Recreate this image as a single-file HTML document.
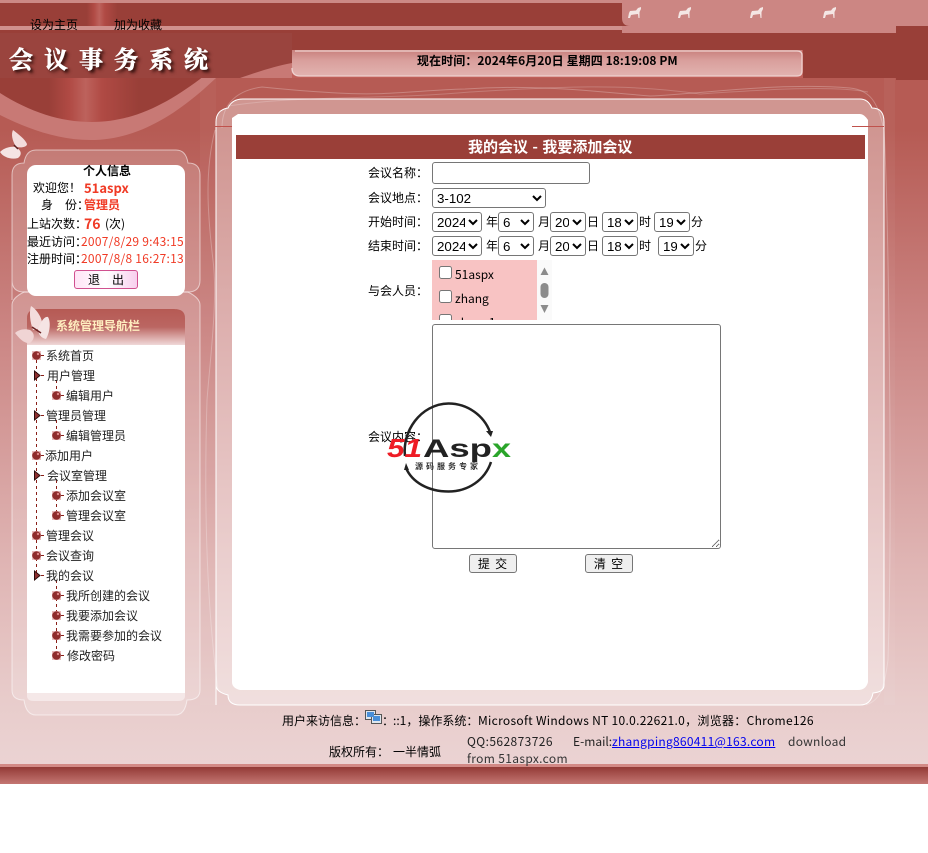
<!DOCTYPE html>
<html lang="zh"><head><meta charset="utf-8"><title>会议事务系统</title>
<style>
html,body{margin:0;padding:0;background:#fff;}
body{width:928px;height:853px;overflow:hidden;position:relative;font:12px/14px "WenQuanYi Zen Hei","Noto Sans CJK SC",sans-serif;color:#000;}
.a{position:absolute;}
.t{position:absolute;white-space:nowrap;line-height:14px;}
.r{color:#f03a25;}
.b{font-weight:bold;}
select{position:absolute;font:13.33px "Liberation Sans",sans-serif;height:20px;padding:0;box-sizing:border-box;background:#fff;border:1px solid #767676;border-radius:3px;}
input[type=checkbox]{position:absolute;margin:0;width:13px;height:13px;}
button{position:absolute;font:12px "WenQuanYi Zen Hei",sans-serif;padding:0;letter-spacing:1px;}
.n{color:#222;}
</style></head><body>
<div class="a" style="left:0;top:0;width:928px;height:784px;background:linear-gradient(#b65b54 0,#b65b54 130px,#cb8583 330px,#dfb4b3 560px,#e8cccb 700px,#ebd3d3 764px);"></div>
<svg class="a" style="left:0;top:0" width="928" height="784" viewBox="0 0 928 784">
<defs>
<linearGradient id="sheen" x1="0" x2="1" y1="0" y2="0"><stop offset="0" stop-color="#993f38"/><stop offset=".24" stop-color="#993f38"/><stop offset=".34" stop-color="#b04a44"/><stop offset=".42" stop-color="#bd625c"/><stop offset=".5" stop-color="#b04a44"/><stop offset=".68" stop-color="#993f38"/><stop offset="1" stop-color="#993f38"/></linearGradient>
<linearGradient id="bar" x1="0" x2="0" y1="0" y2="1"><stop offset="0" stop-color="#c8807c"/><stop offset=".4" stop-color="#d99f9c"/><stop offset="1" stop-color="#e2b3b0"/></linearGradient>
<linearGradient id="foot" x1="0" x2="0" y1="0" y2="1"><stop offset="0" stop-color="#933a36"/><stop offset="1" stop-color="#c47672"/></linearGradient>
<linearGradient id="head" x1="0" x2="0" y1="0" y2="1"><stop offset="0" stop-color="#b65a54"/><stop offset=".5" stop-color="#bb6662"/><stop offset="1" stop-color="#f0d8d8"/></linearGradient>
</defs>
<!-- band under swoosh -->
<path d="M0 70 L0 115 C30 130 60 140 90 140 C140 140 180 112 216 78 L240 70 Z" fill="#c87975"/>
<!-- dark swoosh -->
<path d="M0 70 L0 93 C30 112 60 122 92 122 C135 122 170 102 204 76 L204 70 Z" fill="url(#sheen)"/>
<!-- top bands -->
<rect x="0" y="0" width="928" height="3" fill="#cc8985"/>
<rect x="0" y="3" width="928" height="23" fill="#993f38"/>
<rect x="0" y="26" width="928" height="4" fill="#d0918d"/>
<rect x="0" y="30" width="928" height="48" fill="#993f38"/>
<rect x="70" y="3" width="70" height="23" fill="url(#sheen)"/>
<rect x="0" y="33" width="292" height="45" fill="#9a443e"/>
<path d="M240 78C260 71 276 66 292 63V78Z" fill="#c87975"/>
<path d="M622 0H928V26H896V33H622Z" fill="#cc8683"/>
<path d="M622 3V18Q622 26 630 26H622V3Z" fill="#993f38"/>
<rect x="896" y="26" width="32" height="54" fill="#993f38"/>
<!-- time bar -->
<rect x="292" y="50" width="511" height="28" fill="#c0605a"/>
<path d="M292 50H802V71Q802 76 797 76H300Q292 76 292 68Z" fill="url(#bar)"/>
<path d="M292 68Q292 76 300 76H797Q802 76 802 71V55Q802 51 797 51H295" fill="none" stroke="#efd2d0" stroke-width="1.300"/>
<!-- right column tint -->
<rect x="884" y="78" width="11" height="627" fill="#fff" opacity=".04"/>
<rect x="200" y="78" width="16" height="627" fill="#fff" opacity=".03"/>
<!-- wavy lines -->
<path d="M222 128C222 115 226 92 262 87C300 91 320 92 337 93C390 96 420 90 465 89C540 84 600 92 650 96C700 94 780 82 850 88C870 90 878 102 884 130C888 200 893 500 888 660C884 690 880 700 866 705" fill="none" stroke="#fff" stroke-opacity=".25"/>
<path d="M228 106C300 95 380 100 470 92C540 88 620 82 700 94C760 90 830 85 868 92" fill="none" stroke="#fff" stroke-opacity=".2"/>
<path d="M215 130C205 170 207 210 213 260C218 300 210 360 207 400C204 500 206 600 218 690" fill="none" stroke="#fff" stroke-opacity=".25"/>
<!-- right panel -->
<path d="M216 705V122Q216 110 228 108Q232 99 243 99H860Q868 99 872 108Q884 108 884 122V685Q884 692 873 693Q871 705 860 705H240Q228 705 228 695Q216 692 216 685Z" fill="#fff" fill-opacity=".36" stroke="#fff" stroke-width="1"/>
<path d="M232 118Q235 116 238 114H860Q864 114 868 120V682Q866 690 858 690H240Q232 688 232 682Z" fill="#fff"/>
<rect x="215" y="126" width="17" height="1" fill="#c0524c"/>
<rect x="852" y="126" width="32" height="1" fill="#c0524c"/>
<rect x="236" y="135" width="629" height="24" fill="#9a3f38"/>
<!-- left panel 1 -->
<path d="M12 300V175Q12 163 24 163Q26 150 36 150H176Q186 150 188 163Q200 163 200 175V280Q200 292 188 292H24Q12 292 12 280Z" fill="#fff" fill-opacity=".18" stroke="#fff" stroke-opacity=".55"/>
<!-- left panel 2 -->
<path d="M12 690V305Q12 298 24 292H188Q200 298 200 305V690Q200 700 187 700Q185 715 175 715H36Q26 715 24 700Q12 700 12 690Z" fill="#fff" fill-opacity=".18" stroke="#fff" stroke-opacity=".55"/>
<rect x="27" y="165" width="158" height="131" rx="9" fill="#fff"/>
<path d="M27 320Q27 309 40 309H172Q185 309 185 320V693H27Z" fill="#fff"/>
<path d="M27 345V318Q27 309 38 309H174Q185 309 185 318V345Z" fill="url(#head)"/>
<path d="M27 693H185V696Q185 701 178 701H34Q27 701 27 696Z" fill="#f5e8e8"/>
<!-- footer strip -->
<rect x="0" y="764" width="928" height="3" fill="#d28a86"/>
<rect x="0" y="767" width="928" height="17" fill="url(#foot)"/>
<rect x="0" y="784" width="928" height="69" fill="#fff"/>
<!-- dogs -->
<g fill="#f4e6e4">
<path d="M628 18L629 13 630 11 636 10.500 638 8 641 7 641 9 639.500 12 639.500 18 638.500 18 638 14 634 14.500 631 15 630 18Z"/>
<path d="M678 18L679 13 680 11 686 10.500 688 8 691 7 691 9 689.500 12 689.500 18 688.500 18 688 14 684 14.500 681 15 680 18Z"/>
<path d="M750 18L751 13 752 11 758 10.500 760 8 763 7 763 9 761.500 12 761.500 18 760.500 18 760 14 756 14.500 753 15 752 18Z"/>
<path d="M823 18L824 13 825 11 831 10.500 833 8 836 7 836 9 834.500 12 834.500 18 833.500 18 833 14 829 14.500 826 15 825 18Z"/>
</g>
<!-- butterflies -->
<g>
<path d="M16 147C12 140 11 134 13 130C18 134 25 139 27 144C27 147 22 148 16 147Z" fill="#f3dcdc"/>
<path d="M15 147C9 146 3 149 0 152C3 157 11 160 18 158C22 155 22 150 15 147Z" fill="#f5e4e4"/>
<path d="M14 145L18 149" stroke="#5a2020" stroke-width="1.500"/>
</g>
<g>
<path d="M33 330C30 322 29 312 31 306C36 309 41 316 42 322C43 327 38 330 33 330Z" fill="#f3dcdc"/>
<path d="M38 329C41 322 44 316 48 317C51 322 50 332 46 339C41 338 38 334 38 329Z" fill="#f5e4e4"/>
<path d="M30 330C24 328 18 330 15 333C19 338 24 344 30 343C34 340 36 334 30 330Z" fill="#f0d4d4"/>
<path d="M32 327L41 333" stroke="#6a2222" stroke-width="1.500"/>
</g>
<!-- tree lines -->
<g stroke="#8a1f18" stroke-dasharray="3 3" fill="none">
<path d="M36.500 360V575M56.500 380V392M56.500 420V432M56.500 480V512M56.500 580V652"/>
<path d="M41 355.500H46M41 375.500H46M61 395.500H66M41 415.500H46M61 435.500H66M41 455.500H46M41 475.500H46M61 495.500H66M61 515.500H66M41 535.500H46M41 555.500H46M41 575.500H46M61 595.500H66M61 615.500H66M61 635.500H66M61 655.500H66"/>
</g>
<g fill="#e8bcbc"><rect x="32" y="351" width="9" height="9"/><rect x="32" y="451" width="9" height="9"/><rect x="32" y="531" width="9" height="9"/><rect x="32" y="551" width="9" height="9"/>
<rect x="52" y="391" width="9" height="9"/><rect x="52" y="431" width="9" height="9"/><rect x="52" y="491" width="9" height="9"/><rect x="52" y="511" width="9" height="9"/><rect x="52" y="591" width="9" height="9"/><rect x="52" y="611" width="9" height="9"/><rect x="52" y="631" width="9" height="9"/><rect x="52" y="651" width="9" height="9"/></g>
<g fill="#8e2c2c"><circle cx="36.500" cy="355.500" r="4.300"/><circle cx="36.500" cy="455.500" r="4.300"/><circle cx="36.500" cy="535.500" r="4.300"/><circle cx="36.500" cy="555.500" r="4.300"/>
<circle cx="56.500" cy="395.500" r="4.300"/><circle cx="56.500" cy="435.500" r="4.300"/><circle cx="56.500" cy="495.500" r="4.300"/><circle cx="56.500" cy="515.500" r="4.300"/><circle cx="56.500" cy="595.500" r="4.300"/><circle cx="56.500" cy="615.500" r="4.300"/><circle cx="56.500" cy="635.500" r="4.300"/><circle cx="56.500" cy="655.500" r="4.300"/></g>
<g fill="#d88"><circle cx="38" cy="354" r="1.200"/><circle cx="38" cy="454" r="1.200"/><circle cx="38" cy="534" r="1.200"/><circle cx="38" cy="554" r="1.200"/>
<circle cx="58" cy="394" r="1.200"/><circle cx="58" cy="434" r="1.200"/><circle cx="58" cy="494" r="1.200"/><circle cx="58" cy="514" r="1.200"/><circle cx="58" cy="594" r="1.200"/><circle cx="58" cy="614" r="1.200"/><circle cx="58" cy="634" r="1.200"/><circle cx="58" cy="654" r="1.200"/></g>
<g fill="#8e3030" stroke="#2a0a0a"><path d="M34.500 371V380L40 375.500Z"/><path d="M34.500 411V420L40 415.500Z"/><path d="M34.500 471V480L40 475.500Z"/><path d="M34.500 571V580L40 575.500Z"/></g>
<!-- monitor icon -->
<g stroke="#555" fill="#dfe6ee"><rect x="365.500" y="710.500" width="10" height="9"/><rect x="371.500" y="714.500" width="10" height="9"/></g>
<rect x="367" y="712" width="7" height="5" fill="#4a8fd8"/><rect x="373" y="716" width="7" height="5" fill="#4a8fd8"/>
</svg>

<div class="t" style="left:30px;top:18px">设为主页</div>
<div class="t" style="left:114px;top:18px">加为收藏</div>
<div class="t" style="left:9px;top:41px;font:bold 24px/34px 'Noto Serif CJK SC',serif;letter-spacing:11px;color:#fff;-webkit-text-stroke:.6px #fff;text-shadow:2px 2px 2px #3c1512,3px 3px 3px #5a2420">会议事务系统</div>
<div class="t b" style="left:417px;top:54px;letter-spacing:.08px">现在时间：2024年6月20日 星期四 18:19:08 PM</div>
<div class="t b" style="left:468px;top:140px;color:#fff;font-size:15px;word-spacing:1px">我的会议 - 我要添加会议</div>

<!-- profile -->
<div class="t b" style="left:83px;top:164px">个人信息</div>
<div class="t" style="left:33px;top:181px">欢迎您！</div><div class="t r b" style="left:84px;top:181px;font-size:13px">51aspx</div>
<div class="t" style="left:41px;top:198px">身　份：</div><div class="t r b" style="left:84px;top:198px">管理员</div>
<div class="t" style="left:27px;top:217px">上站次数：</div><div class="t r b" style="left:84px;top:217px;font-size:14px">76</div><div class="t" style="left:105px;top:217px">(次)</div>
<div class="t" style="left:27px;top:235px">最近访问：</div><div class="t r" style="left:81px;top:235px;letter-spacing:.25px">2007/8/29 9:43:15</div>
<div class="t" style="left:27px;top:252px">注册时间：</div><div class="t r" style="left:81px;top:252px;letter-spacing:.25px">2007/8/8 16:27:13</div>
<div class="a" style="left:74px;top:270px;width:62px;height:17px;border:1px solid #d0508f;border-radius:3px;background:linear-gradient(90deg,#ffe4f6,#fff 50%,#f8d0ee);text-align:center;line-height:18px;white-space:pre">退　出</div>

<!-- nav -->
<div class="t b" style="left:56px;top:319px;color:#ffeec0">系统管理导航栏</div>
<div class="t n" style="left:46px;top:349px">系统首页</div>
<div class="t n" style="left:47px;top:369px">用户管理</div>
<div class="t n" style="left:66px;top:389px">编辑用户</div>
<div class="t n" style="left:46px;top:409px">管理员管理</div>
<div class="t n" style="left:66px;top:429px">编辑管理员</div>
<div class="t n" style="left:45px;top:449px">添加用户</div>
<div class="t n" style="left:47px;top:469px">会议室管理</div>
<div class="t n" style="left:66px;top:489px">添加会议室</div>
<div class="t n" style="left:66px;top:509px">管理会议室</div>
<div class="t n" style="left:46px;top:529px">管理会议</div>
<div class="t n" style="left:46px;top:549px">会议查询</div>
<div class="t n" style="left:46px;top:569px">我的会议</div>
<div class="t n" style="left:66px;top:589px">我所创建的会议</div>
<div class="t n" style="left:66px;top:609px">我要添加会议</div>
<div class="t n" style="left:66px;top:629px">我需要参加的会议</div>
<div class="t n" style="left:67px;top:649px">修改密码</div>

<!-- form -->
<div class="t" style="left:368px;top:166px">会议名称：</div>
<input class="a" type="text" style="left:432px;top:162px;width:158px;height:22px;box-sizing:border-box;border:1px solid #767676;border-radius:3px;padding:1px 2px;margin:0;background:#fff">
<div class="t" style="left:368px;top:191px">会议地点：</div>
<select style="left:432px;top:188px;width:114px"><option>3-102</option></select>
<div class="t" style="left:368px;top:215px">开始时间：</div>
<select style="left:432px;top:212px;width:50px"><option>2024</option></select><div class="t" style="left:486px;top:215px">年</div>
<select style="left:498px;top:212px;width:36px"><option>6</option></select><div class="t" style="left:538px;top:215px">月</div>
<select style="left:550px;top:212px;width:36px"><option>20</option></select><div class="t" style="left:587px;top:215px">日</div>
<select style="left:602px;top:212px;width:36px"><option>18</option></select><div class="t" style="left:639px;top:215px">时</div>
<select style="left:654px;top:212px;width:36px"><option>19</option></select><div class="t" style="left:691px;top:215px">分</div>
<div class="t" style="left:368px;top:239px">结束时间：</div>
<select style="left:432px;top:236px;width:50px"><option>2024</option></select><div class="t" style="left:486px;top:239px">年</div>
<select style="left:498px;top:236px;width:36px"><option>6</option></select><div class="t" style="left:538px;top:239px">月</div>
<select style="left:550px;top:236px;width:36px"><option>20</option></select><div class="t" style="left:587px;top:239px">日</div>
<select style="left:602px;top:236px;width:36px"><option>18</option></select><div class="t" style="left:639px;top:239px">时</div>
<select style="left:658px;top:236px;width:36px"><option>19</option></select><div class="t" style="left:695px;top:239px">分</div>
<div class="t" style="left:368px;top:284px">与会人员：</div>
<div class="a" style="left:432px;top:260px;width:105px;height:60px;background:#f8c3c3;overflow:hidden">
<input type="checkbox" style="left:7px;top:6px"><div class="t" style="left:23px;top:8px">51aspx</div>
<input type="checkbox" style="left:7px;top:30px"><div class="t" style="left:23px;top:32px">zhang</div>
<input type="checkbox" style="left:7px;top:54px"><div class="t" style="left:23px;top:56px">zhang1</div>
</div>
<div class="a" style="left:537px;top:260px;width:15px;height:60px;background:#fafafa"></div>
<svg class="a" style="left:537px;top:260px" width="15" height="60"><path d="M3.500 15L7.500 7.500 11.500 15Z" fill="#8c8c8c"/><rect x="3.500" y="23" width="8" height="15" rx="4" fill="#8c8c8c"/><path d="M3.500 45L7.500 53 11.500 45Z" fill="#8c8c8c"/></svg>
<textarea class="a" style="left:432px;top:324px;width:289px;height:225px;box-sizing:border-box;margin:0;border:1px solid #767676;border-radius:3px;background:#fff"></textarea>
<div class="t" style="left:368px;top:430px">会议内容：</div>
<button style="left:469px;top:554px;width:48px;height:19px;background:#efefef;border:1px solid #767676;border-radius:3px;white-space:pre">提 交</button>
<button style="left:585px;top:554px;width:48px;height:19px;background:#efefef;border:1px solid #767676;border-radius:3px;white-space:pre">清 空</button>

<!-- watermark -->
<svg class="a" style="left:385px;top:400px" width="130" height="96" viewBox="385 400 130 96">
<path d="M405 456C402 432 420 404 448.500 403.500C468 403.500 484 416 490 432" fill="none" stroke="#222" stroke-width="2.500"/>
<path d="M491 462C485 480 468 491.500 448.500 491.500C428 491.500 412 482 406 468" fill="none" stroke="#222" stroke-width="2.500"/>
<path d="M486 431L493 431 491 437Z" fill="#222"/><path d="M404 470L409 470 406 463Z" fill="#222"/>
<text x="387" y="457" font-family="'Liberation Sans',sans-serif" font-weight="bold" font-style="italic" font-size="26" fill="#ee1c25" textLength="35" lengthAdjust="spacingAndGlyphs">51</text>
<text x="423" y="457" font-family="'Liberation Sans',sans-serif" font-weight="bold" font-size="25" fill="#222" textLength="69" lengthAdjust="spacingAndGlyphs">Asp</text>
<text x="492" y="457" font-family="'Liberation Sans',sans-serif" font-weight="bold" font-size="25" fill="#2aa52a" textLength="19" lengthAdjust="spacingAndGlyphs">x</text>
<text x="415" y="469" font-family="'Noto Sans CJK SC',sans-serif" font-weight="bold" font-size="8" fill="#333" letter-spacing="3">源码服务专家</text>
</svg>

<!-- footer -->
<div class="t" style="left:282px;top:714px">用户来访信息：</div>
<div class="t" style="left:382px;top:714px">：</div>
<div class="t" style="left:393px;top:714px">::1，操作系统：</div>
<div class="t" style="left:478px;top:714px;letter-spacing:.3px">Microsoft Windows NT 10.0.22621.0，浏览器：Chrome126</div>
<div class="t" style="left:329px;top:745px">版权所有：</div><div class="t" style="left:393px;top:745px">一半情弧</div>
<div class="t" style="left:467px;top:735px;color:#222;letter-spacing:.4px">QQ:562873726</div>
<div class="t" style="left:573px;top:735px;color:#222">E-mail:</div>
<div class="t" style="left:612px;top:735px;letter-spacing:.26px"><a href="#" style="color:#00e">zhangping860411@163.com</a></div>
<div class="t" style="left:788px;top:735px;color:#333;letter-spacing:.25px">download</div>
<div class="t" style="left:467px;top:752px;color:#333;letter-spacing:.35px">from 51aspx.com</div>
</body></html>
